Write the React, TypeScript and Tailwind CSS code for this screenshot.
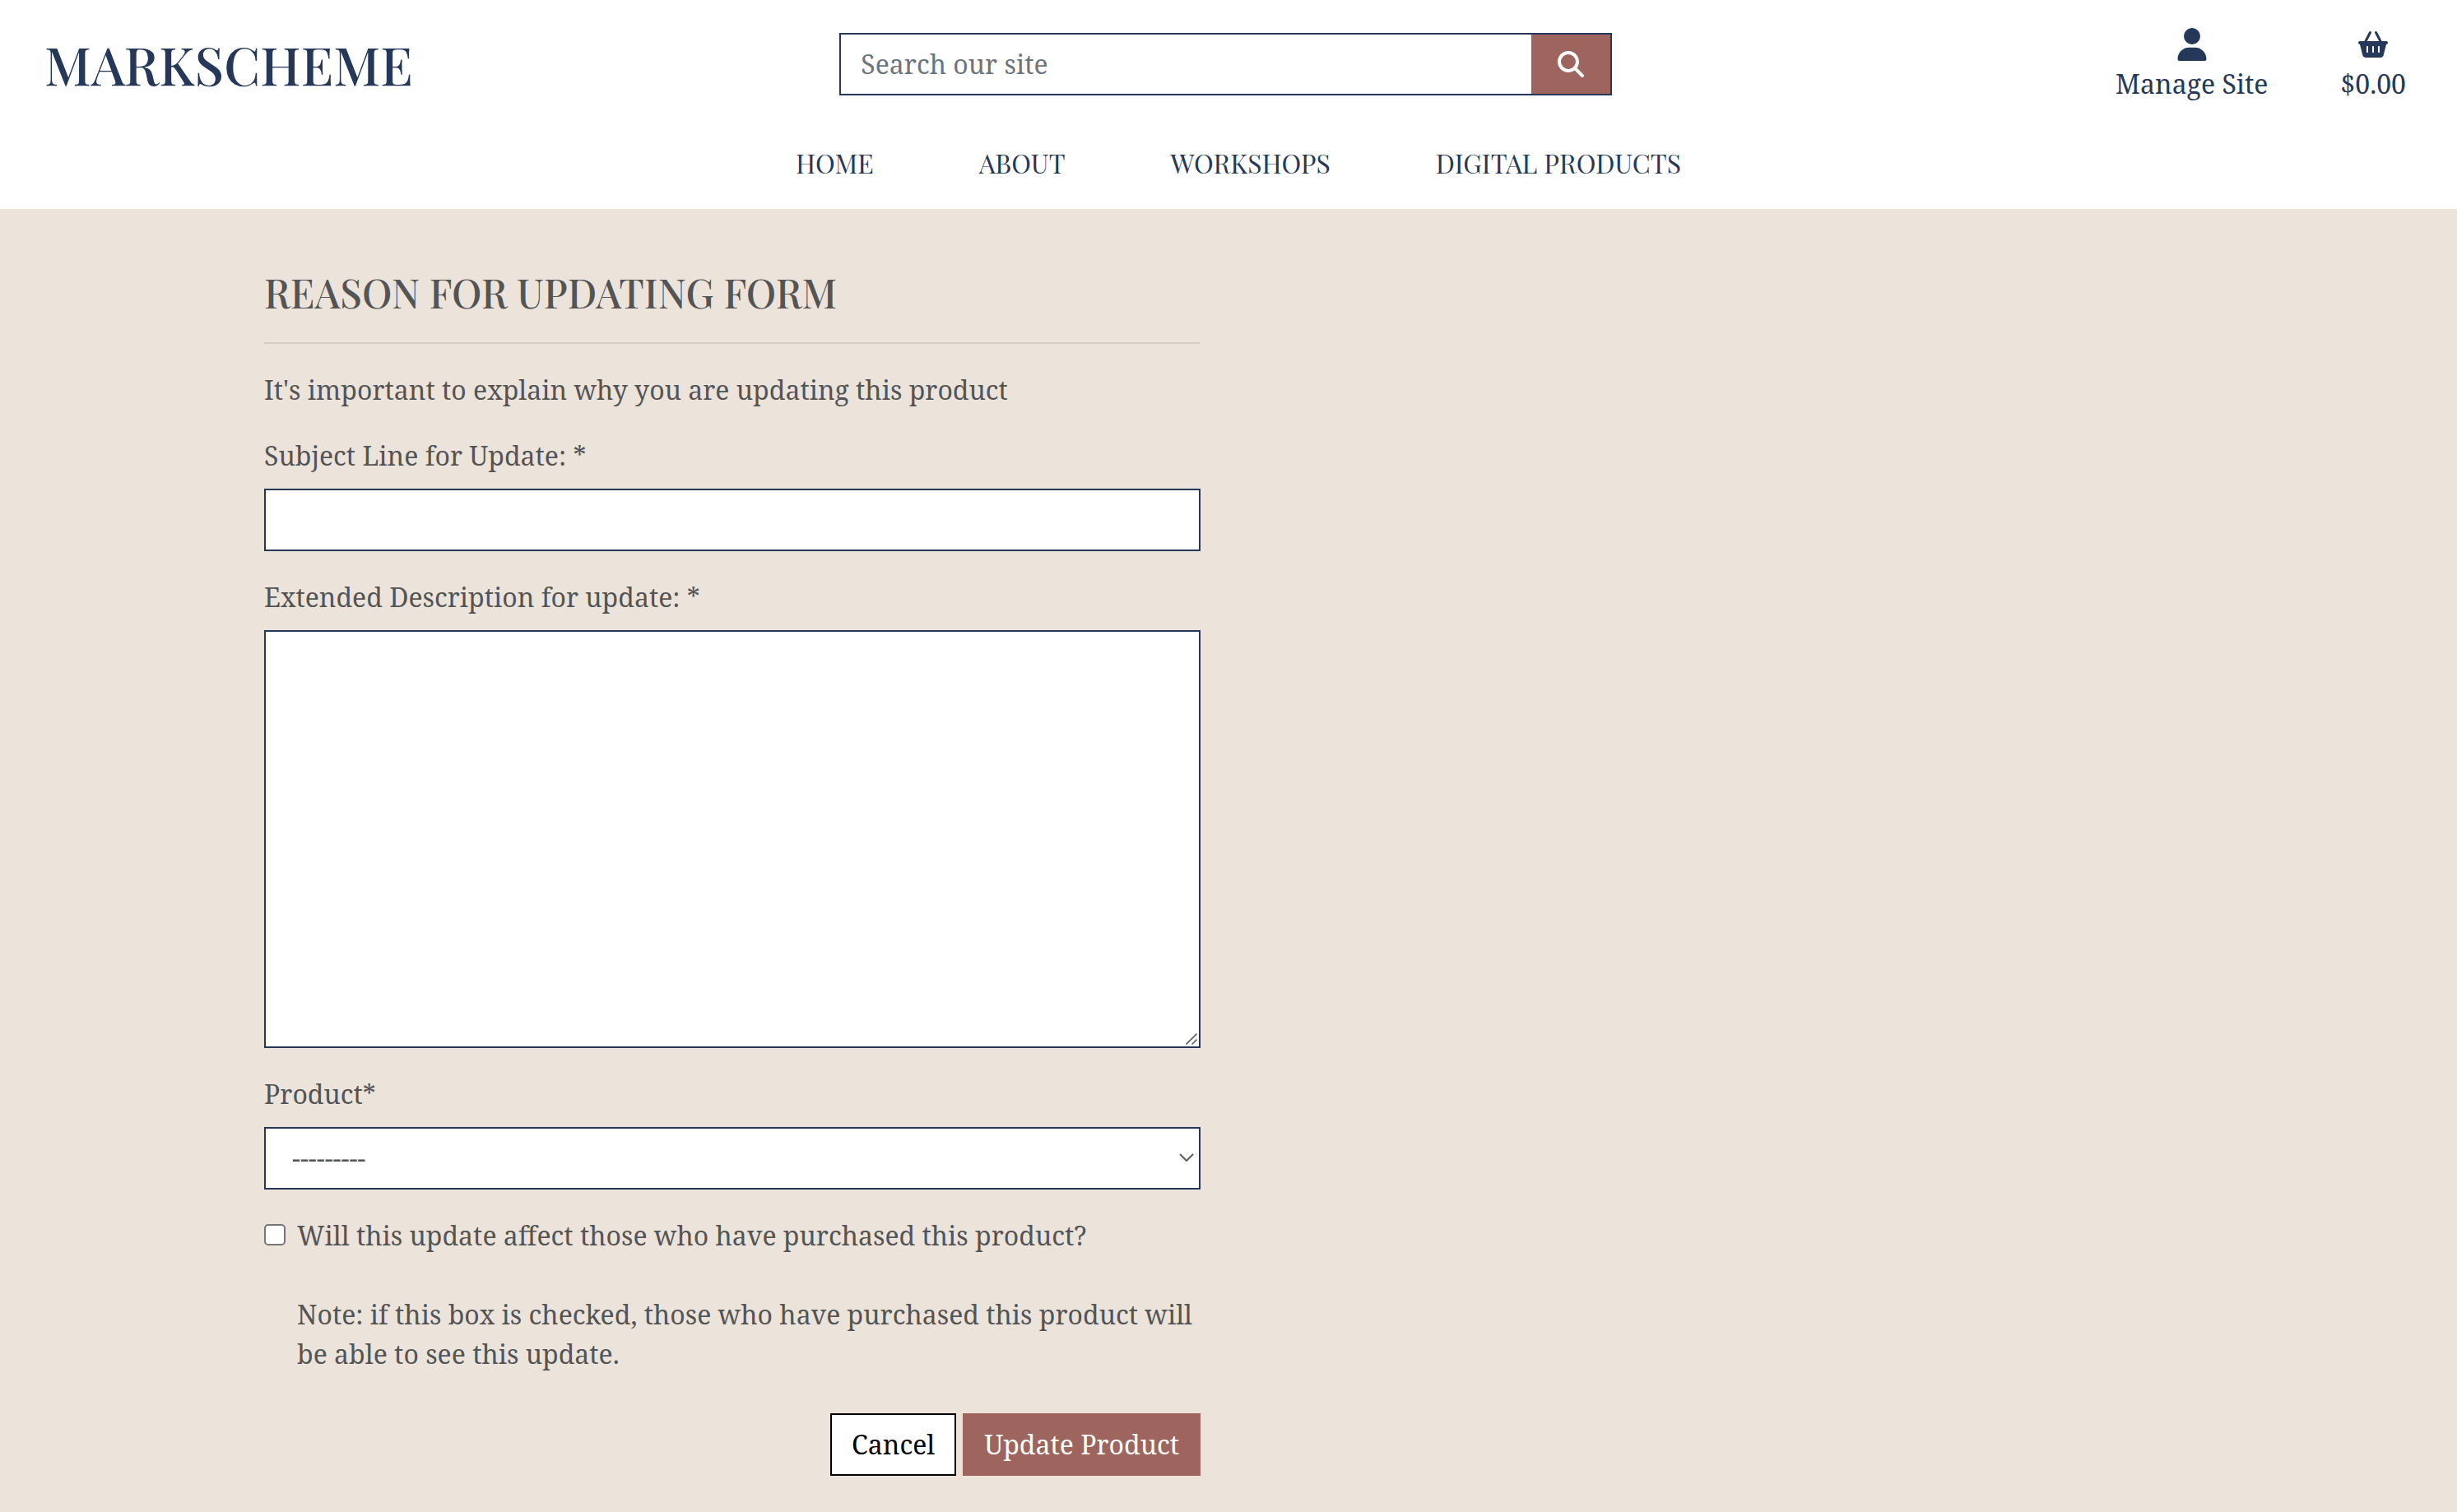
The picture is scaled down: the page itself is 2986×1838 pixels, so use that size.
import React from "react";
import { FaBasketShopping, FaMagnifyingGlass, FaUser } from "react-icons/fa6";

const bodyFont = "font-['Noto_Serif','DejaVu_Serif_Condensed','DejaVu_Serif',serif]";
const displayFont = "font-['Playfair_Display','Liberation_Serif',serif]";
const field = "block w-full rounded-none border-2 border-[#263859] bg-white px-6 outline-none";

const navItems = ["HOME", "ABOUT", "WORKSHOPS", "DIGITAL PRODUCTS"];

function Header() {
  return (
    <header className="bg-white pb-8 text-[#263859]">
      <div className="grid grid-cols-3 items-start">
        <a href="#" className={`${displayFont} mt-[46px] pl-[54px] text-[64px] leading-[64px] font-medium`}>
          MARKSCHEME
        </a>
        <form className="mt-10 pr-8 pl-[25px]" onSubmit={(e) => e.preventDefault()}>
          <div className="flex h-[76px] border-2 border-[#263859]">
            <input
              type="search"
              aria-label="Search our site"
              placeholder="Search our site"
              className="min-w-0 flex-1 px-6 outline-none placeholder:text-[#6c757d]"
            />
            <button type="submit" aria-label="Search" className="flex w-24 items-center justify-center bg-[#9d655e] text-white">
              <FaMagnifyingGlass size={32} />
            </button>
          </div>
        </form>
        <div className="flex justify-end gap-[88px] pt-8 pr-[62px]">
          <a href="#" className="flex flex-col items-center">
            <span className="flex h-[46px] items-start pt-0.5">
              <FaUser size={40} />
            </span>
            Manage Site
          </a>
          <a href="#" className="flex flex-col items-center">
            <span className="flex h-[46px] items-start pt-1.5">
              <FaBasketShopping size={32} className="w-9" />
            </span>
            $0.00
          </a>
        </div>
      </div>
      <nav className={`${displayFont} mt-12 flex justify-center gap-32 pl-6`}>
        {navItems.map((item) => (
          <a key={item} href="#">
            {item}
          </a>
        ))}
      </nav>
    </header>
  );
}

export default function App() {
  return (
    <div className={`${bodyFont} min-h-screen bg-[#ece4db] text-[32px] leading-[48px] text-[#545454]`}>
      <Header />
      <main className="mx-auto grid max-w-[2344px] grid-cols-2 gap-[68px] pt-18 pb-11">
        <div>
          <h1 className={`${displayFont} text-[48px] leading-[58px] font-medium`}>REASON FOR UPDATING FORM</h1>
          <hr className="my-8 border-t-2 border-[#d6cdc4]" />
          <p>It's important to explain why you are updating this product</p>
          <form className="mt-8" onSubmit={(e) => e.preventDefault()}>
            <label htmlFor="subject" className="block">
              Subject Line for Update: *
            </label>
            <input id="subject" type="text" className={`${field} mt-4 h-[76px]`} />
            <label htmlFor="description" className="mt-8 block">
              Extended Description for update: *
            </label>
            <div className="relative mt-4">
              <textarea
                id="description"
                className={`${field} h-[508px] resize-y py-3 [&::-webkit-resizer]:bg-transparent`}
              />
              <svg
                viewBox="0 0 14 14"
                className="pointer-events-none absolute right-1 bottom-1 size-[14px]"
                fill="none"
                stroke="#606060"
                strokeWidth="1.6"
              >
                <path d="M.5 13.5l13-13M7.5 13.5l6-6" />
              </svg>
            </div>
            <label htmlFor="product" className="mt-8 block">
              Product*
            </label>
            <div className="relative mt-4">
              <select id="product" className={`${field} h-[76px] appearance-none pl-8`}>
                <option>---------</option>
              </select>
              <svg
                viewBox="0 0 18 10"
                className="pointer-events-none absolute top-8 right-2 h-[10px] w-[18px]"
                fill="none"
                stroke="#555b60"
                strokeWidth="2"
              >
                <path d="M1 1l8 8 8-8" />
              </svg>
            </div>
            <div className="mt-8 flex gap-3.5">
              <input
                id="affects"
                type="checkbox"
                className="mt-[10px] size-[26px] shrink-0 appearance-none rounded-[5px] border-2 border-[#767676] bg-white checked:bg-[#263859]"
              />
              <div>
                <label htmlFor="affects">Will this update affect those who have purchased this product?</label>
                <p className="mt-12">
                  Note: if this box is checked, those who have purchased this product will be able to see this update.
                </p>
              </div>
            </div>
            <div className="mt-12 flex justify-end gap-2">
              <button type="button" className="h-[76px] border-2 border-black bg-white px-6 text-black">
                Cancel
              </button>
              <button type="submit" className="h-[76px] border-2 border-[#9d655e] bg-[#9d655e] px-6 text-white">
                Update Product
              </button>
            </div>
          </form>
        </div>
      </main>
    </div>
  );
}
